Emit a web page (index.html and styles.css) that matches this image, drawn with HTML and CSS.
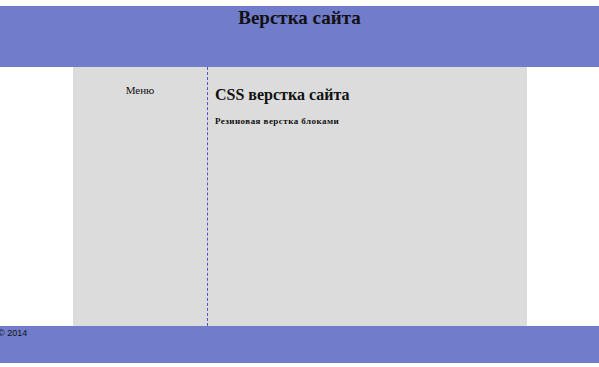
FILE: index.html
```
<!DOCTYPE html>
<html lang="ru">
<head>
    <meta charset="UTF-8">
    <title>Верстка сайта</title>
    <link rel="stylesheet" href="styles.css">
</head>
<body>
    <div class="header">
        <h1>Верстка сайта</h1>
    </div>

    <div class="main">
        <div class="sidebar">
            <p>Меню</p>
        </div>
        <div class="content">
            <h2>CSS верстка сайта</h2>
            <h4>Резиновая верстка блоками</h4>
        </div>
    </div>

    <div class="footer">
        <p>© 2014</p>
    </div>
</body>
</html>
```

FILE: styles.css
```
* {
    margin: 0;
    padding: 0;
    box-sizing: border-box;
}

body {
    font-family: 'Liberation Serif', 'Times New Roman', serif;
    background: #ffffff;
    color: #111111;
    padding-top: 6px;
}

.header {
    background: #717ccb;
    height: 61px;
    text-align: center;
}

.header h1 {
    font-size: 19px;
    padding-top: 1px;
}

.main {
    display: flex;
    margin: 0 72px 0 73px;
    height: 259px;
    background: #dcdcdc;
}

.sidebar {
    width: 135px;
    border-right: 1px dashed #4c58c4;
    text-align: center;
    padding-top: 17px;
    font-size: 11px;
}

.content {
    flex: 1;
    padding: 19px 7px;
}

.content h2 {
    font-size: 16px;
    margin-bottom: 12px;
}

.content h4 {
    font-size: 9px;
    letter-spacing: 0.45px;
}

.footer {
    background: #717ccb;
    height: 37px;
    font-family: 'Liberation Sans', Arial, sans-serif;
    font-size: 9px;
    padding-top: 2px;
}

.footer p {
    text-indent: -2px;
}
```
